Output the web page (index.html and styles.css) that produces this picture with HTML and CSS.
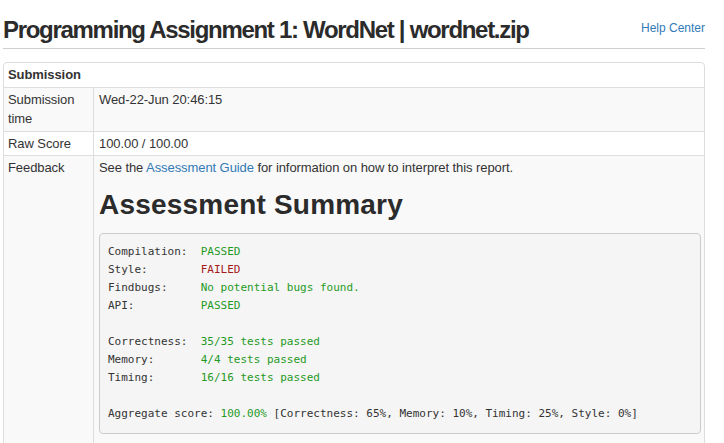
FILE: index.html
```html
<!DOCTYPE html>
<html lang="en">
<head>
<meta charset="utf-8">
<title>Programming Assignment 1: WordNet | wordnet.zip</title>
<link rel="stylesheet" href="styles.css">
</head>
<body>
<div class="page">
  <header class="top">
    <h2 class="title">Programming Assignment 1: WordNet | wordnet.zip</h2>
    <a class="help" href="#">Help Center</a>
  </header>
  <table class="sub">
    <thead>
      <tr><th colspan="2">Submission</th></tr>
    </thead>
    <tbody>
      <tr class="odd"><td class="lab">Submission time</td><td class="val">Wed-22-Jun 20:46:15</td></tr>
      <tr><td class="lab">Raw Score</td><td class="val">100.00 / 100.00</td></tr>
      <tr class="odd">
        <td class="lab">Feedback</td>
        <td class="val">
          <p class="intro">See the <a href="#">Assessment Guide</a> for information on how to interpret this report.</p>
          <h1 class="summary">Assessment Summary</h1>
<pre class="report">Compilation:  <span class="ok">PASSED</span>
Style:        <span class="bad">FAILED</span>
Findbugs:     <span class="ok">No potential bugs found.</span>
API:          <span class="ok">PASSED</span>

Correctness:  <span class="ok">35/35 tests passed</span>
Memory:       <span class="ok">4/4 tests passed</span>
Timing:       <span class="ok">16/16 tests passed</span>

Aggregate score: <span class="ok">100.00%</span> [Correctness: 65%, Memory: 10%, Timing: 25%, Style: 0%]</pre>
        </td>
      </tr>
    </tbody>
  </table>
</div>
</body>
</html>
```
FILE: styles.css
```css
html, body {
  margin: 0;
  padding: 0;
  background: #fff;
}
body {
  font-family: "Liberation Sans", Arial, sans-serif;
  font-size: 13px;
  letter-spacing: -0.08px;
  color: #333;
}
a {
  color: #337ab7;
  text-decoration: none;
}
.page {
  width: 702px;
  padding-left: 3px;
}
.top {
  display: flex;
  justify-content: space-between;
  align-items: flex-start;
  padding: 16px 0 4px;
  border-bottom: 1px solid #cfcfcf;
}
.title {
  margin: 0;
  font-size: 24px;
  line-height: 28px;
  font-weight: bold;
  letter-spacing: -1.3px;
  color: #2b2b2b;
}
.help {
  margin-top: 5px;
  font-size: 12px;
  line-height: 14px;
  letter-spacing: 0;
  color: #337ab7;
}
.sub {
  margin-top: 13px;
  width: 100%;
  border: 1px solid #ddd;
  border-radius: 4px;
  border-spacing: 0;
  line-height: 19.5px;
}
.sub th {
  text-align: left;
  font-weight: bold;
  padding: 2px 5px 2px 4px;
}
.sub td {
  border-top: 1px solid #ddd;
  padding: 2px 3px 2px 5px;
  vertical-align: top;
}
.sub td.lab {
  width: 80px;
  padding-left: 4px;
  padding-right: 5px;
  border-right: 1px solid #ddd;
}
.sub tr.odd td {
  background: #f9f9f9;
}
.intro {
  margin: 0;
}
.summary {
  margin: 11px 0 13px;
  font-size: 28px;
  line-height: 31px;
  font-weight: bold;
  letter-spacing: 0.2px;
  color: #2b2b2b;
}
.report {
  margin: 0 0 10px;
  padding: 9.5px 9px 9.5px 8px;
  background: #f5f5f5;
  border: 1px solid #ccc;
  border-radius: 4px;
  font-family: "DejaVu Sans Mono", "Liberation Mono", monospace;
  font-size: 11px;
  line-height: 18px;
  letter-spacing: 0;
  color: #333;
}
.ok {
  color: #1f9a1f;
}
.bad {
  color: #a61a1a;
}
```
